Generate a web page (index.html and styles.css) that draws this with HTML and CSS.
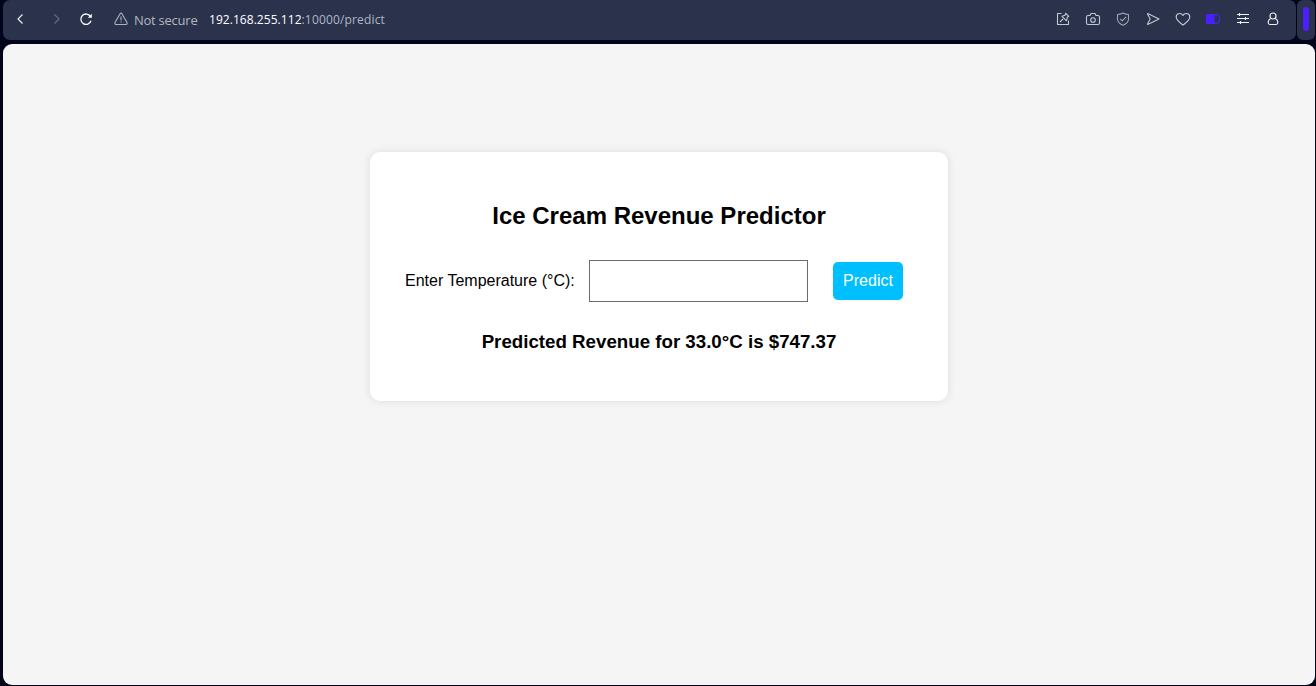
FILE: index.html
```html
<!DOCTYPE html>
<html lang="en">
<head>
<meta charset="utf-8">
<title>Ice Cream Revenue Predictor</title>
<link rel="stylesheet" href="styles.css">
</head>
<body>
<div class="browser">
  <div class="top">
    <header class="toolbar">
      <nav class="nav">
        <svg class="icon back" viewBox="0 0 20 20"><path d="M12.500 5.500 8 10l4.500 4.500"/></svg>
        <svg class="icon forward" viewBox="0 0 20 20"><path d="m7.500 5.500 4.500 4.500-4.500 4.500"/></svg>
        <svg class="icon reload" viewBox="0 0 20 20"><path d="M14.500 7.500A5.200 5.200 0 1 0 15 11.800"/><path class="tip" d="M15.800 4.700v4h-4Z"/></svg>
        <svg class="icon warning" viewBox="0 0 20 20"><path d="M9.100 4.700 4 13.600Q3.500 15.500 5 15.500h10q1.500 0 1-1.900L10.900 4.700q-.9-1.200-1.800 0ZM10 7.500v4M10 12.500v1"/></svg>
      </nav>
      <span class="secure">Not secure</span>
      <span class="url"><span class="host">192.168.255.112</span><span class="path">:10000/predict</span></span>
      <div class="actions">
        <svg class="icon" viewBox="0 0 20 20"><path d="M8.500 4.500h-4v11h11v-4M7 13l3-3M12.800 4.300l3 3-1.500 1-.8 3.500-4.500-4.500 3-1Z"/></svg>
        <svg class="icon" viewBox="0 0 20 20"><path d="M5 6.500h2L8 4.500h4l1 2h2q1.500 0 1.500 1.500v6q0 1.500-1.500 1.500H5q-1.500 0-1.500-1.500V8Q3.500 6.500 5 6.500Z"/><circle cx="10" cy="11" r="2.300"/></svg>
        <svg class="icon dim" viewBox="0 0 20 20"><path d="M10 4q-2.500 1.500-5.500 1.500V10q0 4 5.500 6.200Q15.500 14 15.500 10V5.500Q12.500 5.500 10 4ZM7.200 9.900l2 2 4-4"/></svg>
        <svg class="icon" viewBox="0 0 20 20"><path d="M5.200 4.700q-.9-.3-.6.600L7.200 10l-2.600 4.700q-.3.900.6.600L16 10 5.200 4.700Z"/></svg>
        <svg class="icon" viewBox="0 0 20 20"><path d="M10 6.500C8.500 3.500 3.200 3.700 3.200 8.100c0 3.600 4.300 5.700 6.800 7.900 2.500-2.200 6.800-4.300 6.800-7.900 0-4.400-5.300-4.600-6.800-1.600Z"/></svg>
        <svg class="icon battery" viewBox="0 0 20 20"><path class="solid" d="M4 5.500h7v9H4l-.5-.5V6Z"/><path d="M11 5.500h3.500l2 2.500v4l-2 2.500H11"/></svg>
        <svg class="icon bright" viewBox="0 0 20 20"><path d="M4 5.500h12M4 9.500h12M4 13.500h12M6.500 4v3M12.500 8v3M7.500 12v3"/></svg>
        <svg class="icon bright" viewBox="0 0 20 20"><circle cx="10" cy="7" r="3"/><path d="M7.700 9.500C5.500 10.500 5 13 5.500 14.500q.2 1 1.500 1h6q1.300 0 1.500-1c.5-1.500 0-4-2.200-5"/></svg>
      </div>
    </header>
    <aside class="side"><span class="indicator"></span></aside>
  </div>
  <main class="page">
    <section class="card">
      <h2 class="title">Ice Cream Revenue Predictor</h2>
      <form class="form">
        <label class="label" for="temperature">Enter Temperature (°C):</label>
        <input class="input" id="temperature" type="text">
        <button class="button" type="button">Predict</button>
      </form>
      <h3 class="result">Predicted Revenue for 33.0°C is $747.37</h3>
    </section>
  </main>
</div>
</body>
</html>
```
FILE: styles.css
```css
* { box-sizing: border-box; }
body {
  margin: 0;
  background: #02041a;
  font-family: "Liberation Sans", Arial, sans-serif;
  color: #000;
}
.browser {
  display: flex;
  flex-direction: column;
  gap: 4px;
  height: 686px;
  padding: 0 1px 1px 3px;
  overflow: hidden;
}
.top { display: flex; gap: 1px; height: 40px; }
.toolbar {
  display: flex;
  align-items: center;
  width: 1293px;
  padding: 0 13px 2px 7px;
  background: #2b324c;
  border-radius: 7px;
  font-family: "Open Sans", "Noto Sans", sans-serif;
  white-space: nowrap;
}
.nav { display: flex; align-items: center; }
.icon {
  width: 20px;
  height: 20px;
  flex: none;
  fill: none;
  stroke: #c3c9d0;
  stroke-width: 1.1;
  stroke-linejoin: round;
}
.back { stroke: #f0f2f5; }
.forward { margin-left: 17px; stroke: #666d83; }
.reload { margin-left: 9px; stroke: #fff; stroke-width: 1.3; }
.tip { fill: #fff; stroke: none; }
.warning { margin-left: 15px; stroke: #aeb5bc; }
.dim { stroke: #9da6b0; }
.bright { stroke: #eef1f4; stroke-width: 1.2; }
.battery { stroke: #4a20ff; stroke-width: 1.2; }
.solid { fill: #4a20ff; }
.secure {
  width: 75px;
  margin-left: 3px;
  padding-top: 2px;
  font-size: 13px;
  font-weight: 400;
  letter-spacing: -0.25px;
  color: #b3b7bd;
}
.url { font-size: 12px; color: #abb8c7; }
.host { color: #fff; letter-spacing: 0.05px; }
.path { letter-spacing: 0.16px; }
.actions { display: flex; gap: 10px; margin-left: auto; }
.side {
  display: flex;
  justify-content: center;
  width: 18px;
  padding-top: 7px;
  background: #2b324c;
  border-radius: 6px;
}
.indicator { width: 6px; height: 24px; border-radius: 3px; background: #4a20ff; }
.page {
  flex: 1;
  padding-top: 108px;
  background: #f5f5f5;
  border-radius: 9px;
}
.card {
  width: 578px;
  height: 249px;
  margin-left: 367px;
  padding: 50px 35px 0;
  background: #fff;
  border-radius: 10px;
  box-shadow: 0 0 10px rgba(0, 0, 0, 0.1);
  text-align: center;
}
.title { margin: 0; font-size: 24px; line-height: 28px; }
.form { display: flex; align-items: center; height: 42px; margin-top: 30px; }
.label { width: 184px; text-align: left; font-size: 16px; line-height: 18px; }
.input {
  width: 219px;
  height: 42px;
  padding: 10px;
  border: 1px solid #6b6b6b;
  border-radius: 0;
  background: #fff;
  font: 16px "Liberation Sans", Arial, sans-serif;
}
.button {
  width: 70px;
  height: 38px;
  margin-left: 25px;
  padding: 0;
  border: 0;
  border-radius: 5px;
  background: #00bfff;
  color: #fff;
  font: 16px "Liberation Sans", Arial, sans-serif;
}
.result { margin: 29px 0 0; font-size: 18.720px; line-height: 22px; }
```
